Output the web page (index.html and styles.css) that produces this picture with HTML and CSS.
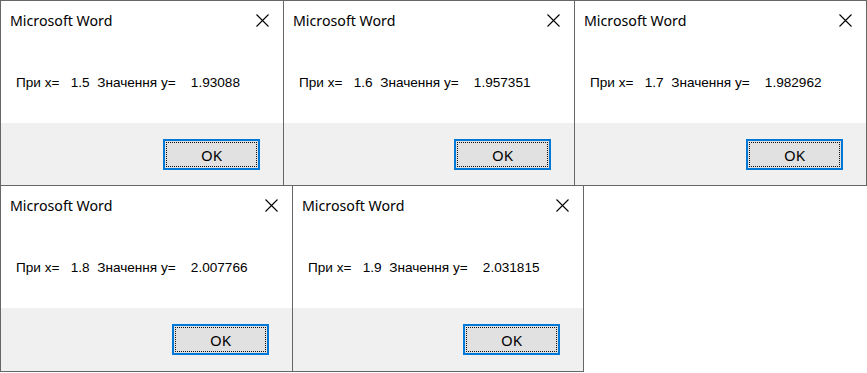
FILE: index.html
```html
<!DOCTYPE html>
<html>
<head>
<meta charset="utf-8">
<link rel="stylesheet" href="styles.css">
</head>
<body>
<div class="screen">
  <div class="row">
    <div class="dlg w1">
      <div class="titlebar"><span class="title">Microsoft Word</span><svg class="close" width="13" height="13" viewBox="0 0 13 13"><path d="M0.5 0.5L12.5 12.5M12.5 0.5L0.5 12.5" stroke="#000" stroke-width="1.1" fill="none"/></svg></div>
      <div class="content"><span class="msg">При x=   1.5  Значення у=    1.93088</span></div>
      <div class="footer"><div class="btn"><span>OK</span></div></div>
    </div>
    <div class="dlg w2">
      <div class="titlebar"><span class="title">Microsoft Word</span><svg class="close" width="13" height="13" viewBox="0 0 13 13"><path d="M0.5 0.5L12.5 12.5M12.5 0.5L0.5 12.5" stroke="#000" stroke-width="1.1" fill="none"/></svg></div>
      <div class="content"><span class="msg">При x=   1.6  Значення у=    1.957351</span></div>
      <div class="footer"><div class="btn"><span>OK</span></div></div>
    </div>
    <div class="dlg w3">
      <div class="titlebar"><span class="title">Microsoft Word</span><svg class="close" width="13" height="13" viewBox="0 0 13 13"><path d="M0.5 0.5L12.5 12.5M12.5 0.5L0.5 12.5" stroke="#000" stroke-width="1.1" fill="none"/></svg></div>
      <div class="content"><span class="msg">При x=   1.7  Значення у=    1.982962</span></div>
      <div class="footer"><div class="btn"><span>OK</span></div></div>
    </div>
  </div>
  <div class="row row2">
    <div class="dlg w4">
      <div class="titlebar"><span class="title">Microsoft Word</span><svg class="close" width="13" height="13" viewBox="0 0 13 13"><path d="M0.5 0.5L12.5 12.5M12.5 0.5L0.5 12.5" stroke="#000" stroke-width="1.1" fill="none"/></svg></div>
      <div class="content"><span class="msg">При x=   1.8  Значення у=    2.007766</span></div>
      <div class="footer"><div class="btn"><span>OK</span></div></div>
    </div>
    <div class="dlg w5">
      <div class="titlebar"><span class="title">Microsoft Word</span><svg class="close" width="13" height="13" viewBox="0 0 13 13"><path d="M0.5 0.5L12.5 12.5M12.5 0.5L0.5 12.5" stroke="#000" stroke-width="1.1" fill="none"/></svg></div>
      <div class="content"><span class="msg">При x=   1.9  Значення у=    2.031815</span></div>
      <div class="footer"><div class="btn"><span>OK</span></div></div>
    </div>
  </div>
</div>
</body>
</html>
```
FILE: styles.css
```css
html, body {
  margin: 0;
  padding: 0;
  background: #ffffff;
}
.screen {
  width: 867px;
  height: 373px;
  overflow: hidden;
}
.row {
  display: flex;
}
.row2 {
  margin-top: -1px;
}
.dlg {
  box-sizing: border-box;
  height: 186px;
  border: 1px solid #666666;
  background: #ffffff;
  display: flex;
  flex-direction: column;
}
.row2 .dlg {
  height: 187px;
}
.dlg + .dlg {
  margin-left: -1px;
}
.w1 { width: 284px; }
.w2 { width: 292px; }
.w3 { width: 293px; }
.w4 { width: 293px; }
.w5 { width: 292px; }
.titlebar {
  height: 38px;
  display: flex;
  align-items: center;
  padding-left: 9px;
  padding-right: 14px;
}
.title {
  font-family: "Segoe UI", "Noto Sans", sans-serif;
  font-size: 14.2px;
  color: #000000;
  line-height: 18px;
  padding-top: 1px;
}
.close {
  margin-left: auto;
  display: block;
}
.content {
  height: 84px;
  box-sizing: border-box;
  padding-top: 34px;
  padding-left: 15px;
}
.msg {
  font-family: "Liberation Sans", Arial, sans-serif;
  font-size: 13.6px;
  line-height: 16px;
  color: #000000;
  white-space: pre;
}
.footer {
  flex: 1;
  background: #f0f0f0;
  display: flex;
  justify-content: flex-end;
  align-items: flex-start;
  padding-top: 16px;
  padding-right: 23px;
}
.btn {
  box-sizing: border-box;
  width: 97px;
  height: 31px;
  border: 2px solid #0078d7;
  background: #e1e1e1;
  padding: 1px;
  display: flex;
}
.btn span {
  flex: 1;
  border: 1px dotted #111111;
  display: flex;
  align-items: center;
  justify-content: center;
  font-family: "Segoe UI", "Noto Sans", sans-serif;
  font-size: 15px;
  color: #000000;
}
```
